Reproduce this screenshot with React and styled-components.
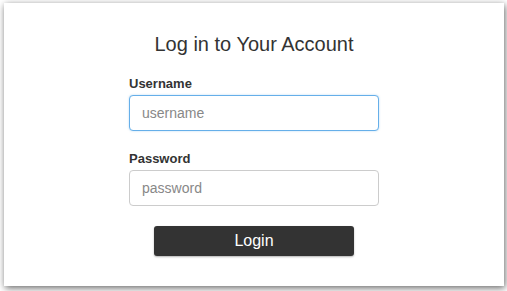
import styled, { createGlobalStyle } from "styled-components";

const GlobalStyle = createGlobalStyle`
  html, body {
    margin: 0;
    padding: 0;
    background: #fff;
    font-family: "Liberation Sans", Arial, sans-serif;
  }
`;

const Page = styled.div`
  padding: 3px 3px 5px 4px;
`;

const Card = styled.div`
  width: 500px;
  height: 283px;
  box-sizing: border-box;
  background: #fff;
  box-shadow: 1px 2px 7px rgba(0, 0, 0, 0.6);
  padding-top: 29px;
  display: flex;
  flex-direction: column;
  align-items: center;
`;

const Title = styled.h2`
  margin: 0 0 20px;
  font-size: 20px;
  line-height: 24px;
  font-weight: normal;
  color: #333;
`;

const Form = styled.form`
  width: 250px;
  display: flex;
  flex-direction: column;
`;

const Label = styled.label`
  font-size: 13px;
  line-height: 16px;
  font-weight: bold;
  color: #333;
  margin-bottom: 3px;
`;

const Input = styled.input`
  box-sizing: border-box;
  height: 36px;
  width: 100%;
  padding: 0 12px;
  margin-bottom: ${(p) => p.$gap}px;
  border: 1px solid #ccc;
  border-radius: 4px;
  font-family: "Liberation Sans", Arial, sans-serif;
  font-size: 14px;
  color: #555;
  outline: none;
  &::placeholder {
    color: #888;
  }
  &:focus {
    border-color: #66afe9;
    box-shadow: 0 0 2px rgba(102, 175, 233, 0.5);
  }
`;

const Button = styled.button`
  align-self: center;
  width: 200px;
  height: 30px;
  border: none;
  border-radius: 3px;
  background: #333;
  color: #fff;
  font-family: "Liberation Sans", Arial, sans-serif;
  font-size: 16px;
  box-shadow: 0 1px 2px rgba(0, 0, 0, 0.3);
  cursor: pointer;
`;

export default function App() {
  return (
    <>
      <GlobalStyle />
      <Page>
        <Card>
          <Title>Log in to Your Account</Title>
          <Form onSubmit={(e) => e.preventDefault()}>
            <Label htmlFor="username">Username</Label>
            <Input id="username" placeholder="username" autoFocus $gap={20} />
            <Label htmlFor="password">Password</Label>
            <Input id="password" type="password" placeholder="password" $gap={20} />
            <Button type="submit">Login</Button>
          </Form>
        </Card>
      </Page>
    </>
  );
}
